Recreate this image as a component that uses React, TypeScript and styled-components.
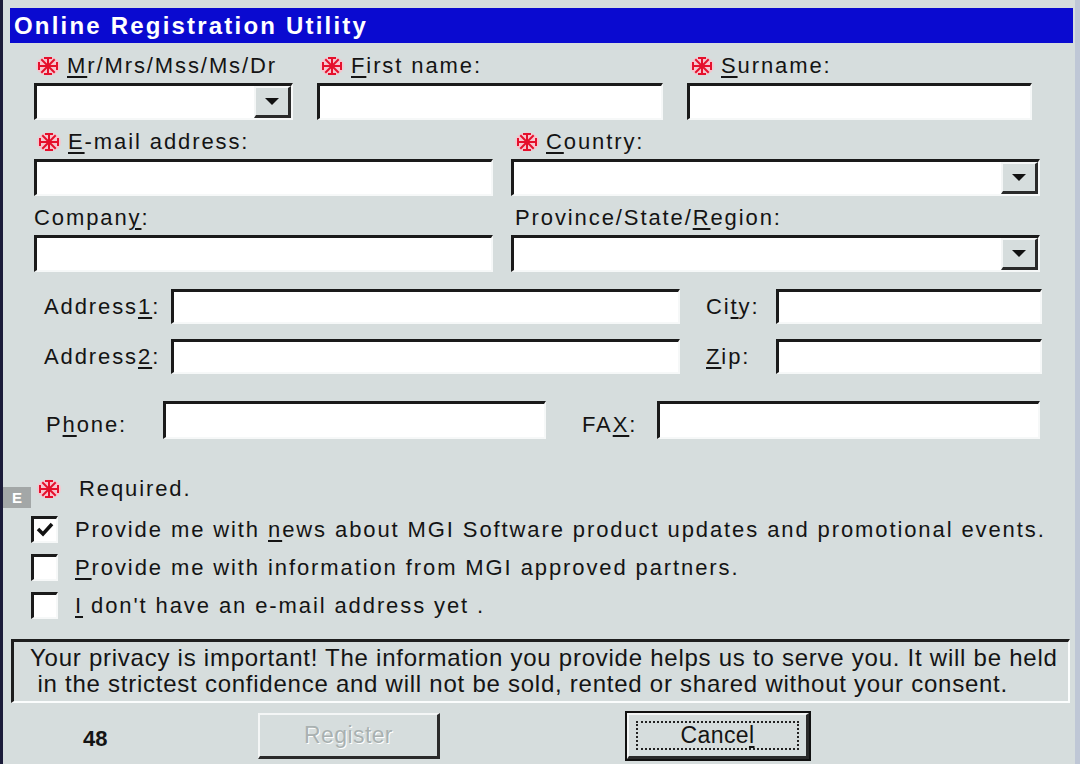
import * as React from 'react';
import styled, {createGlobalStyle} from 'styled-components';

const GlobalStyle = createGlobalStyle`
  html, body {
    margin: 0;
    padding: 0;
    background: #d6dddd;
  }
  body {
    font-family: "Liberation Sans", Arial, sans-serif;
  }
`;

const Window = styled.div`
  position: relative;
  box-sizing: border-box;
  width: 1080px;
  height: 764px;
  overflow: hidden;
  background: #d6dddd;
  border-left: 3px solid #1c1c3a;
  border-right: 5px solid #bfc7d6;
  padding: 8px 2px 0 7px;
  color: #141414;
  font-size: 22px;
  letter-spacing: 1.9px;
`;

const TitleBar = styled.div`
  height: 35px;
  background: #0a0ad0;
  color: #ffffff;
  font-weight: 700;
  font-size: 24px;
  letter-spacing: 2.2px;
  line-height: 35px;
  padding-left: 4px;
  white-space: nowrap;
`;

const U = styled.span`
  text-decoration: underline;
  text-underline-offset: 3px;
  text-decoration-thickness: 2px;
`;

const TopGrid = styled.div`
  display: grid;
  margin: 10px 0 0 24px;
  row-gap: 9px;
`;

const FieldRow = styled.div<{cols: string; gap: number}>`
  display: grid;
  grid-template-columns: ${p => p.cols};
  column-gap: ${p => p.gap}px;
`;

const FieldGroup = styled.div`
  display: flex;
  flex-direction: column;
  gap: 4px;
`;

const Label = styled.div<{indent?: number}>`
  display: flex;
  align-items: center;
  gap: 7px;
  height: 26px;
  padding-left: ${p => p.indent || 0}px;
  white-space: nowrap;
`;

const Sunken = styled.div<{h: number}>`
  box-sizing: border-box;
  height: ${p => p.h}px;
  background: #ffffff;
  border-top: 3px solid #1a1a1a;
  border-left: 3px solid #1a1a1a;
  border-bottom: 2px solid #f6f8f8;
  border-right: 2px solid #f6f8f8;
  display: flex;
  justify-content: flex-end;
`;

const DropButton = styled.div`
  box-sizing: border-box;
  width: 37px;
  height: 100%;
  background: #d6dddd;
  border-top: 2px solid #f4f6f6;
  border-left: 2px solid #f4f6f6;
  border-bottom: 3px solid #2a2a2a;
  border-right: 3px solid #2a2a2a;
  display: flex;
  align-items: center;
  justify-content: center;
`;

const AddressGrid = styled.div`
  display: grid;
  grid-template-columns: 127px 509px 96px 266px;
  grid-auto-rows: 35px;
  row-gap: 15px;
  align-items: center;
  margin: 17px 0 0 34px;
`;

const PhoneRow = styled.div`
  display: grid;
  grid-template-columns: 117px 383px 111px 383px;
  align-items: end;
  margin: 27px 0 0 36px;
`;

const SideLabel = styled.div<{indent?: number; drop?: number}>`
  padding-left: ${p => p.indent || 0}px;
  padding-bottom: ${p => p.drop || 0}px;
  white-space: nowrap;
`;

const RequiredRow = styled.div`
  display: flex;
  align-items: center;
  gap: 18px;
  height: 26px;
  margin: 37px 0 0 27px;
`;

const CheckList = styled.div`
  display: flex;
  flex-direction: column;
  gap: 11px;
  margin: 14px 0 0 21px;
`;

const CheckRow = styled.div`
  display: flex;
  align-items: center;
  gap: 17px;
  height: 27px;
  white-space: nowrap;
`;

const CheckBox = styled.div`
  box-sizing: border-box;
  width: 27px;
  height: 27px;
  background: #ffffff;
  border-top: 3px solid #1a1a1a;
  border-left: 3px solid #1a1a1a;
  border-bottom: 2px solid #f6f8f8;
  border-right: 2px solid #f6f8f8;
  display: flex;
  align-items: center;
  justify-content: center;
`;

const Privacy = styled.div`
  box-sizing: border-box;
  height: 64px;
  margin: 20px 3px 0 1px;
  border-top: 3px solid #1e1e1e;
  border-left: 3px solid #1e1e1e;
  border-bottom: 2px solid #fbfdfd;
  border-right: 2px solid #fbfdfd;
  padding: 3px 0 0 16px;
  font-size: 24px;
  line-height: 26px;
  letter-spacing: 0.75px;
  white-space: nowrap;
`;

const Footer = styled.div`
  display: grid;
  grid-template-columns: 175px 182px 187px 182px;
  align-items: center;
  margin: 10px 0 0 73px;
  height: 46px;
`;

const PageNum = styled.div`
  font-weight: 700;
  font-size: 22px;
  letter-spacing: 0;
  padding-top: 5px;
`;

const Button = styled.div<{disabled?: boolean; isDefault?: boolean}>`
  box-sizing: border-box;
  height: 46px;
  display: flex;
  align-items: center;
  justify-content: center;
  background: #d6dddd;
  border-top: 2px solid #f4f6f6;
  border-left: 2px solid #f4f6f6;
  border-bottom: 3px solid #2a2a2a;
  border-right: 3px solid #2a2a2a;
  color: ${p => (p.disabled ? '#a9b1b1' : '#141414')};
  text-shadow: ${p => (p.disabled ? '1px 1px 0 #ffffff' : 'none')};
  outline: ${p => (p.isDefault ? '2px solid #111' : 'none')};
  font-size: 23px;
  letter-spacing: 0.4px;
`;

const FocusRect = styled.div`
  box-sizing: border-box;
  width: calc(100% - 14px);
  height: calc(100% - 12px);
  border: 2px dotted #222;
  display: flex;
  align-items: center;
  justify-content: center;
`;

const Tab = styled.div`
  position: absolute;
  left: 0;
  top: 487px;
  width: 28px;
  height: 21px;
  background: #a3a7a7;
  color: #ffffff;
  font-weight: 700;
  font-size: 15px;
  letter-spacing: 0;
  display: flex;
  align-items: center;
  justify-content: center;
`;

const Star: React.FC = () => (
  <svg width="24" height="20" viewBox="0 0 24 20">
    <ellipse cx="12" cy="10" rx="12" ry="9.5" fill="#f5c6cf" />
    <g stroke="#e5102c" strokeWidth="2" strokeLinecap="square">
      <line x1="3" y1="10" x2="21" y2="10" />
      <line x1="12" y1="2" x2="12" y2="18" />
      <line x1="6" y1="4" x2="18" y2="16" />
      <line x1="18" y1="4" x2="6" y2="16" />
      <line x1="3" y1="7" x2="3" y2="13" />
      <line x1="21" y1="7" x2="21" y2="13" />
      <line x1="9" y1="2" x2="15" y2="2" />
      <line x1="9" y1="18" x2="15" y2="18" />
    </g>
  </svg>
);

const Arrow: React.FC = () => (
  <svg width="14" height="8" viewBox="0 0 14 8">
    <polygon points="0,0 14,0 7,7" fill="#111" />
  </svg>
);

const Tick: React.FC = () => (
  <svg width="18" height="16" viewBox="0 0 18 16">
    <polyline points="2,7 7,12 16,2" fill="none" stroke="#111" strokeWidth="3.5" />
  </svg>
);

interface InputProps {
  h?: number;
  combo?: boolean;
}
const Input: React.FC<InputProps> = ({h = 37, combo}) => (
  <Sunken h={h}>{combo && <DropButton><Arrow /></DropButton>}</Sunken>
);

interface FieldProps {
  required?: boolean;
  label: React.ReactNode;
  combo?: boolean;
  indent?: number;
}
const Field: React.FC<FieldProps> = ({required, label, combo, indent}) => (
  <FieldGroup>
    <Label indent={indent}>
      {required && <Star />}
      <span>{label}</span>
    </Label>
    <Input combo={combo} />
  </FieldGroup>
);

interface CheckProps {
  checked?: boolean;
  children: React.ReactNode;
}
const Check: React.FC<CheckProps> = ({checked, children}) => (
  <CheckRow>
    <CheckBox>{checked && <Tick />}</CheckBox>
    <span>{children}</span>
  </CheckRow>
);

const App: React.FC = () => (
  <Window>
    <GlobalStyle />
    <TitleBar>Online Registration Utility</TitleBar>

    <TopGrid>
      <FieldRow cols="259px 346px 345px" gap={24}>
        <Field required combo indent={2} label={<><U>M</U>r/Mrs/Mss/Ms/Dr</>} />
        <Field required indent={3} label={<><U>F</U>irst name:</>} />
        <Field required indent={3} label={<><U>S</U>urname:</>} />
      </FieldRow>
      <FieldRow cols="459px 529px" gap={18}>
        <Field required indent={3} label={<><U>E</U>-mail address:</>} />
        <Field required combo indent={4} label={<><U>C</U>ountry:</>} />
      </FieldRow>
      <FieldRow cols="459px 529px" gap={18}>
        <Field label={<>Compan<U>y</U>:</>} />
        <Field combo indent={4} label={<>Province/State/<U>R</U>egion:</>} />
      </FieldRow>
    </TopGrid>

    <AddressGrid>
      <SideLabel>Address<U>1</U>:</SideLabel>
      <Input h={35} />
      <SideLabel indent={26}>Ci<U>t</U>y:</SideLabel>
      <Input h={35} />
      <SideLabel>Address<U>2</U>:</SideLabel>
      <Input h={35} />
      <SideLabel indent={26}><U>Z</U>ip:</SideLabel>
      <Input h={35} />
    </AddressGrid>

    <PhoneRow>
      <SideLabel drop={1}>P<U>h</U>one:</SideLabel>
      <Input h={38} />
      <SideLabel indent={36} drop={1}>FA<U>X</U>:</SideLabel>
      <Input h={38} />
    </PhoneRow>

    <RequiredRow>
      <Star />
      <span>Required.</span>
    </RequiredRow>

    <CheckList>
      <Check checked>Provide me with <U>n</U>ews about MGI Software product updates and promotional events.</Check>
      <Check><U>P</U>rovide me with information from MGI approved partners.</Check>
      <Check><U>I</U> don't have an e-mail address yet .</Check>
    </CheckList>

    <Privacy>
      Your privacy is important! The information you provide helps us to serve you. It will be held
      <br />
      &nbsp;in the strictest confidence and will not be sold, rented or shared without your consent.
    </Privacy>

    <Footer>
      <PageNum>48</PageNum>
      <Button disabled>Register</Button>
      <span />
      <Button isDefault>
        <FocusRect>Cance<U>l</U></FocusRect>
      </Button>
    </Footer>

    <Tab>E</Tab>
  </Window>
);

export default App;
